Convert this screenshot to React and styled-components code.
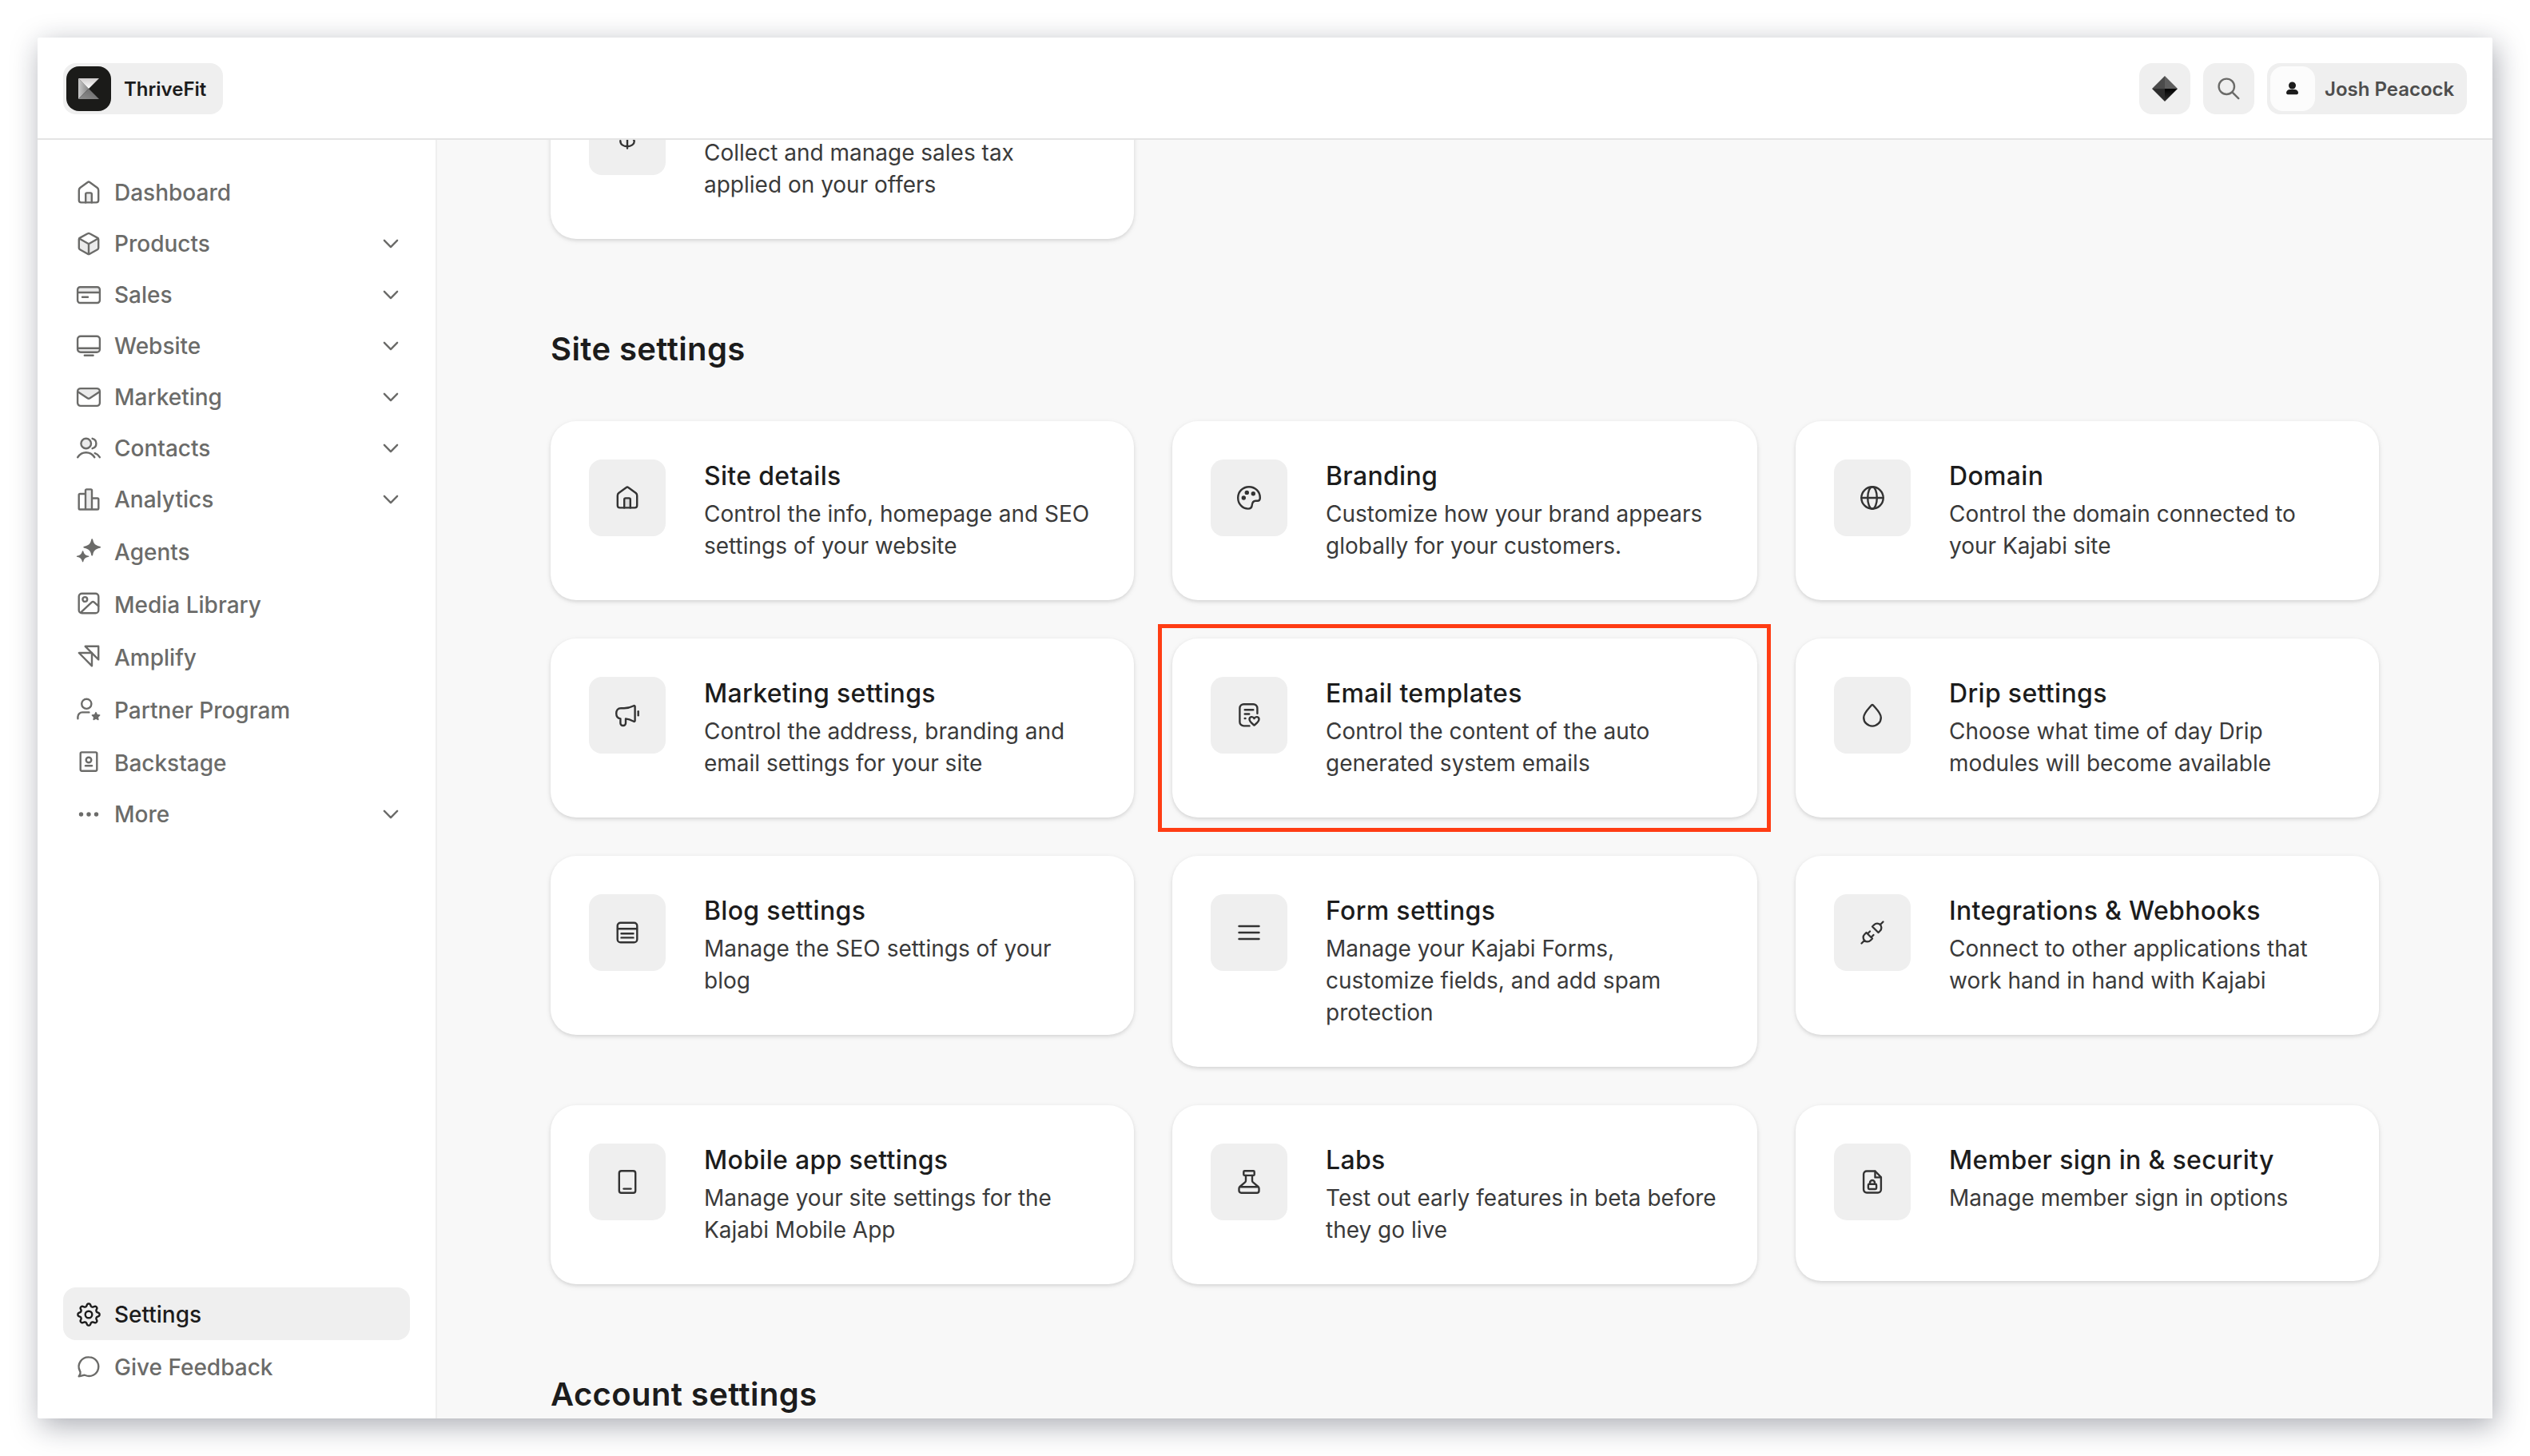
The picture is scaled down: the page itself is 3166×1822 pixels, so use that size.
import React from 'react';
import styled, { createGlobalStyle } from 'styled-components';

const GlobalStyle = createGlobalStyle`
    * {
        box-sizing: border-box;
    }
    body {
        margin: 0;
        background: #ffffff;
        font-family: Inter, 'Liberation Sans', sans-serif;
        -webkit-font-smoothing: antialiased;
    }
    h2, h3, p {
        margin: 0;
    }
`;

const tint = 'rgba(0, 0, 0, 0.08)';

// outline of the settings cog: a circle with eight soft teeth
const cogPath = () => {
    const points = [];
    for (let i = 0; i < 96; i++) {
        const a = (i / 96) * Math.PI * 2;
        const r = 12 + 1.7 * Math.tanh(1.6 * Math.cos(8 * a));
        points.push(`${(16 + r * Math.sin(a)).toFixed(2)} ${(16 - r * Math.cos(a)).toFixed(2)}`);
    }
    return `M${points.join('L')}Z`;
};

const icons = {
    home: (
        <>
            <path d='M12.2 28.4V18a1.6 1.6 0 0 1 1.6-1.6h4.4a1.6 1.6 0 0 1 1.6 1.6v10.4' fill={tint} />
            <path d='M3.8 13.2c0-1.3.5-2.4 1.4-3.2l9.6-7a1.9 1.9 0 0 1 2.4 0l9.6 7c.9.8 1.4 1.9 1.4 3.2v12.4a2.8 2.8 0 0 1-2.8 2.8H6.6a2.8 2.8 0 0 1-2.8-2.8V13.2Z' />
        </>
    ),
    cube: (
        <>
            <path d='M3.8 9.6 16 16.3l12.2-6.7v12.2L16 29 3.8 21.8Z' fill={tint} stroke='none' />
            <path d='M14.8 3.3a2.4 2.4 0 0 1 2.4 0l9.8 5.3c.8.4 1.2 1.2 1.2 2v10.6c0 .9-.5 1.7-1.2 2.1l-9.8 5.4a2.4 2.4 0 0 1-2.4 0L5 23.3c-.7-.4-1.2-1.2-1.2-2.1V10.6c0-.8.4-1.6 1.2-2Z' />
            <path d='M4.2 9.5 16 16.2l11.8-6.7M16 16.2v12.6' />
        </>
    ),
    card: (
        <>
            <path d='M2.2 7h27.6v6H2.2Z' fill={tint} stroke='none' />
            <rect x='2.1' y='6.2' width='27.8' height='19.8' rx='3.2' />
            <path d='M2.5 13h27M8 18.7h7' />
        </>
    ),
    monitor: (
        <>
            <path d='M2.5 18.7h27v4.5h-27Z' fill={tint} stroke='none' />
            <rect x='2.1' y='3.8' width='27.8' height='19.9' rx='3.8' />
            <path d='M2.5 18.7h27M10.8 27.7h10.8' />
        </>
    ),
    mail: (
        <>
            <path d='M3 9.5 14.6 17.2a2.6 2.6 0 0 0 2.8 0L29 9.5 28 5.5H4Z' fill={tint} stroke='none' />
            <rect x='2.1' y='5.1' width='27.8' height='21.8' rx='3.8' />
            <path d='M2.8 9.5 14.5 17.3a2.7 2.7 0 0 0 3 0L29.2 9.5' />
        </>
    ),
    people: (
        <>
            <circle cx='12.7' cy='10' r='6.3' fill={tint} />
            <path d='M20.6 3.8a6.4 6.4 0 0 1 0 12.4M2.2 27.2C4.9 23.4 8.5 21.3 12.7 21.3s7.9 2.1 10.6 5.9M23.7 22.2c2.3.7 4.4 2.3 6.1 5' />
        </>
    ),
    bars: (
        <>
            <path d='M12 3.5h8v25h-8Z' fill={tint} stroke='none' />
            <path d='M12 28.5H5a1.3 1.3 0 0 1-1.3-1.3V10.3A1.3 1.3 0 0 1 5 9h7M20 14.5h7a1.3 1.3 0 0 1 1.3 1.3v11.4a1.3 1.3 0 0 1-1.3 1.3H12V4.7a1.3 1.3 0 0 1 1.3-1.3h5.4A1.3 1.3 0 0 1 20 4.7v23.8' />
        </>
    ),
    sparkles: (
        <g fill='currentColor' stroke='none'>
            <path d='M20.2 1.2c.6 0 .9.5 1 1 1 5 2.8 7.2 8.8 8.6.7.2 1.2.5 1.2 1s-.5.8-1.2 1c-6 1.4-7.8 3.6-8.8 8.6-.1.5-.4 1-1 1s-.9-.5-1-1c-1-5-2.8-7.2-8.8-8.6-.7-.2-1.2-.5-1.2-1s.5-.8 1.2-1c6-1.4 7.8-3.6 8.8-8.6.1-.5.4-1 1-1Z' />
            <path d='M8.6 16.2c.5 0 .7.4.8.8.7 3 2 4.6 6 5.5.6.1 1 .4 1 .8s-.4.7-1 .8c-4 .9-5.3 2.5-6 5.5-.1.4-.3.8-.8.8s-.7-.4-.8-.8c-.7-3-2-4.6-6-5.5-.6-.1-1-.4-1-.8s.4-.7 1-.8c4-.9 5.3-2.5 6-5.5.1-.4.3-.8.8-.8Z' />
        </g>
    ),
    image: (
        <>
            <rect x='3.7' y='3.7' width='24.6' height='24.6' rx='3.8' />
            <circle cx='11.3' cy='11' r='2.9' />
            <path d='m6.2 27.3 13.6-12.7a2.2 2.2 0 0 1 3 0l5.3 4.8' />
        </>
    ),
    amplify: (
        <>
            <path d='M11.7 3.8h16.5v16.6Z' />
            <path d='M3.8 12H20v16.3Z' />
        </>
    ),
    partner: (
        <>
            <circle cx='13.3' cy='9.8' r='6.1' />
            <path d='M2.4 28.3V26A5.6 5.6 0 0 1 8 20.4h8.4' />
            <path
                d='m25 20.6 1.5 2.9 3.2.5-2.3 2.3.5 3.2-2.9-1.4-2.9 1.4.5-3.2-2.3-2.3 3.2-.5Z'
                fill='currentColor'
                strokeWidth='1.4'
            />
        </>
    ),
    badge: (
        <>
            <rect x='5.7' y='4.4' width='20.6' height='23.3' rx='1.6' />
            <circle cx='16' cy='14' r='3.3' />
            <path d='M12 21.3h8' />
        </>
    ),
    dots: (
        <g fill='currentColor' stroke='none'>
            <circle cx='6.5' cy='16' r='2.7' />
            <circle cx='16' cy='16' r='2.7' />
            <circle cx='25.5' cy='16' r='2.7' />
        </g>
    ),
    cog: (
        <>
            <path d={cogPath()} />
            <circle cx='16' cy='16' r='4.3' />
        </>
    ),
    chat: (
        <path d='M16.6 3.4A11.8 11.8 0 1 1 11.7 26c-1-.4-2-.2-3 .2-1.5.6-3 1-5 1 1.3-1.6 2.2-3 1.9-4.8-.1-.7-.4-1.3-.7-2A11.8 11.8 0 0 1 16.6 3.4Z' />
    ),
    chevron: <path d='m7.9 11.8 8.1 8.3 8.1-8.3' />,
    search: <path d='M23 13.3a9.7 9.7 0 1 1-19.4 0 9.7 9.7 0 0 1 19.4 0ZM20.4 20.4l7.8 7.8' />,
    dollar: (
        <path d='M16 2v28.500M24.5 9.5C24 6.6 20.7 4.8 16 4.8s-8.5 2-8.5 5.400c0 3.300 3 4.700 8.500 5.800s8.700 2.400 8.700 5.900-3.700 6.300-8.700 6.300-8.700-2.500-8.700-7' />
    ),
    palette: (
        <>
            <path d='M16 2.2C8.2 2.2 2.2 8.3 2.2 16s5.7 13.6 12.6 13.6c3 0 4.7-1.7 4.9-4.2.3-3.7 1.5-5.6 4.6-5.7h2.3c2.2 0 3.2-1.4 3.2-3.8C29.8 8.2 23.8 2.2 16 2.2Z' />
            <g fill='currentColor' stroke='none'>
                <circle cx='9.3' cy='16' r='2.7' />
                <circle cx='13.3' cy='9.4' r='2.7' />
                <circle cx='21.3' cy='10.7' r='2.7' />
            </g>
        </>
    ),
    globe: (
        <>
            <circle cx='16' cy='16' r='13.7' />
            <ellipse cx='16' cy='16' rx='5.8' ry='13.7' />
            <path d='M2.5 16h27' />
        </>
    ),
    megaphone: (
        <>
            <path d='M8 7.2h4c4.5 0 8-1 12-3 .8-.4 1.6.1 1.6 1v17.6c0 .9-.8 1.4-1.6 1-3.6-1.8-6.3-3-10-3.4V26a3 3 0 0 1-3 3h-.6a3 3 0 0 1-3-3v-5.6C4 19.900 2.2 17.5 2.2 13.8S4.2 7.2 8 7.2Z' />
            <path d='M29.7 11.3v5' />
        </>
    ),
    template: (
        <>
            <path d='M16.5 29.4H9.4a5 5 0 0 1-5-5V7.2a5 5 0 0 1 5-5h12a5 5 0 0 1 5 5v6.6M10.7 9.2h10.6M10.7 14.5h5.500M10.7 20h.8' />
            <path d='M22.5 28.6c-1.8-1.4-6-4.3-6-7.5 0-3.5 4.5-4 6-1 1.5-3 6-2.5 6 1 0 3.2-4.2 6.1-6 7.500Z' />
        </>
    ),
    drop: (
        <path d='M15.2 3.2a1.1 1.1 0 0 1 1.6 0C21.4 8.7 26.8 13.5 26.8 18.9a10.8 10.7 0 0 1-21.6 0C5.2 13.5 10.6 8.7 15.2 3.2Z' />
    ),
    article: (
        <>
            <rect x='3.7' y='3.7' width='24.6' height='24.6' rx='3.8' />
            <path d='M4 11.3h24M8.5 17.2h15M8.5 22.4h15' />
        </>
    ),
    lines: <path d='M3.5 8h25M3.5 16h25M3.5 24h25' />,
    plug: (
        <g transform='translate(-2 -2) scale(1.5)' strokeWidth='1.55'>
            <path d='m7 12 5 5-1.5 1.5a3.536 3.536 0 1 1-5-5L7 12M17 12l-5-5 1.5-1.5a3.536 3.536 0 1 1 5 5L17 12M3 21l2.5-2.5M18.5 5.5 21 3M10 11l-2 2M13 14l-2 2' />
        </g>
    ),
    tablet: (
        <>
            <rect x='5.8' y='2.3' width='20.4' height='27.4' rx='2.8' />
            <path d='M11.5 24.6h9' />
        </>
    ),
    flask: (
        <>
            <rect x='9.3' y='2.3' width='13.4' height='5.6' rx='1.2' />
            <path d='M12 8v6.3c0 .8-.3 1.6-.9 2.1L4.5 22a3 3 0 0 0-1 2.2V27a2.7 2.7 0 0 0 2.7 2.7h19.6a2.7 2.7 0 0 0 2.7-2.7v-2.8a3 3 0 0 0-1-2.2l-6.6-5.6a2.8 2.8 0 0 1-.9-2.1V8M4.5 22.2h23' />
        </>
    ),
    fileLock: (
        <>
            <path d='M19.5 2.5H9a3.9 3.9 0 0 0-3.9 3.9v19.2A3.9 3.9 0 0 0 9 29.5h14a3.9 3.9 0 0 0 3.9-3.9V10.2Z' />
            <path d='M19.5 2.8v7.6h7.2' />
            <rect x='10.9' y='18.7' width='10.2' height='6.3' rx='1.2' />
            <path d='M13 18.5V17a3 3 0 0 1 6 0v1.5' />
        </>
    ),
};

const Svg = styled.svg`
    flex: none;
    width: 32px;
    height: 32px;
    fill: none;
    stroke: currentColor;
    stroke-width: 2.4;
    stroke-linecap: round;
    stroke-linejoin: round;
`;

const Icon = ({ name }) => <Svg viewBox='0 0 32 32'>{icons[name]}</Svg>;

const Logo = () => (
    <svg width='26' height='26' viewBox='0 0 26 26'>
        <defs>
            <linearGradient id='kLeft' x1='0' x2='1' y1='0' y2='0'>
                <stop offset='0' stopColor='#c9c9c9' />
                <stop offset='1' stopColor='#858585' />
            </linearGradient>
            <linearGradient id='kTop' x1='0' x2='0' y1='0' y2='1'>
                <stop offset='0' stopColor='#cfcccc' />
                <stop offset='1' stopColor='#ffffff' />
            </linearGradient>
            <linearGradient id='kBottom' x1='0' x2='1' y1='1' y2='0'>
                <stop offset='0' stopColor='#8f8f8f' />
                <stop offset='1' stopColor='#666666' />
            </linearGradient>
        </defs>
        <path d='M0 0 13 13 0 26Z' fill='url(#kLeft)' />
        <path d='M0 0h26L13 13Z' fill='url(#kTop)' />
        <path d='M0 26h26L13 13Z' fill='url(#kBottom)' />
    </svg>
);

const Gem = () => (
    <svg width='32' height='32' viewBox='0 0 32 32'>
        <defs>
            <linearGradient id='gemBottom' x1='0' x2='0' y1='0' y2='1'>
                <stop offset='0' stopColor='#000000' />
                <stop offset='1' stopColor='#333333' />
            </linearGradient>
        </defs>
        <path d='M16 0v16H0Z' fill='#4b4b4b' />
        <path d='M16 0v16h16Z' fill='#5e5e5e' />
        <path d='M0 16h16v16Z' fill='#2c2c2c' />
        <path d='M16 16h16L16 32Z' fill='url(#gemBottom)' />
    </svg>
);

const Person = () => (
    <svg width='16' height='18' viewBox='0 0 16 18'>
        <circle cx='7.5' cy='5' r='4.5' fill='#1c1c1c' />
        <path d='M4.5 10h6c2.500 0 4.500 1.900 4.500 4.300 0 1-.8 1.900-1.900 1.900H1.900C.8 16.200 0 15.300 0 14.300 0 11.900 2 10 4.500 10Z' fill='#1c1c1c' />
    </svg>
);

const nav = [
    { label: 'Dashboard', icon: 'home' },
    { label: 'Products', icon: 'cube', group: true },
    { label: 'Sales', icon: 'card', group: true },
    { label: 'Website', icon: 'monitor', group: true },
    { label: 'Marketing', icon: 'mail', group: true },
    { label: 'Contacts', icon: 'people', group: true },
    { label: 'Analytics', icon: 'bars', group: true },
    { label: 'Agents', icon: 'sparkles', raised: true },
    { label: 'Media Library', icon: 'image', raised: true },
    { label: 'Amplify', icon: 'amplify', raised: true },
    { label: 'Partner Program', icon: 'partner', raised: true },
    { label: 'Backstage', icon: 'badge', raised: true },
    { label: 'More', icon: 'dots', group: true },
];

const footerNav = [
    { label: 'Settings', icon: 'cog', active: true },
    { label: 'Give Feedback', icon: 'chat' },
];

const siteSettings = [
    { title: 'Site details', icon: 'home', text: 'Control the info, homepage and SEO settings of your website' },
    { title: 'Branding', icon: 'palette', text: 'Customize how your brand appears globally for your customers.' },
    { title: 'Domain', icon: 'globe', text: 'Control the domain connected to your Kajabi site' },
    { title: 'Marketing settings', icon: 'megaphone', text: 'Control the address, branding and email settings for your site' },
    { title: 'Email templates', icon: 'template', text: 'Control the content of the auto generated system emails', highlighted: true },
    { title: 'Drip settings', icon: 'drop', text: 'Choose what time of day Drip modules will become available' },
    { title: 'Blog settings', icon: 'article', text: 'Manage the SEO settings of your blog' },
    { title: 'Form settings', icon: 'lines', text: 'Manage your Kajabi Forms, customize fields, and add spam protection' },
    { title: 'Integrations & Webhooks', icon: 'plug', text: 'Connect to other applications that work hand in hand with Kajabi' },
    { title: 'Mobile app settings', icon: 'tablet', text: 'Manage your site settings for the Kajabi Mobile App' },
    { title: 'Labs', icon: 'flask', text: 'Test out early features in beta before they go live' },
    { title: 'Member sign in & security', icon: 'fileLock', text: 'Manage member sign in options' },
];

const NavItem = ({ item }) => (
    <NavRow $group={item.group} $active={item.active}>
        <NavIcon $raised={item.raised}>
            <Icon name={item.icon} />
        </NavIcon>
        <NavLabel>{item.label}</NavLabel>
        {item.group && <Icon name='chevron' />}
    </NavRow>
);

const SettingCard = ({ title, icon, text, highlighted }) => (
    <Card>
        <Tile>
            <Icon name={icon} />
        </Tile>
        <CardBody>
            <CardTitle>{title}</CardTitle>
            <CardText>{text}</CardText>
        </CardBody>
        {highlighted && <Highlight />}
    </Card>
);

const App = () => {
    return (
        <Page>
            <GlobalStyle />
            <Window>
                <Header>
                    <Pill $width='200px'>
                        <SiteLogo>
                            <Logo />
                        </SiteLogo>
                        <SiteName>ThriveFit</SiteName>
                    </Pill>
                    <HeaderActions>
                        <IconButton>
                            <Gem />
                        </IconButton>
                        <IconButton>
                            <Icon name='search' />
                        </IconButton>
                        <Pill $width='250px'>
                            <Avatar>
                                <Person />
                            </Avatar>
                            <UserName>Josh Peacock</UserName>
                        </Pill>
                    </HeaderActions>
                </Header>
                <Body>
                    <Sidebar>
                        <nav>
                            {nav.map((item) => (
                                <NavItem key={item.label} item={item} />
                            ))}
                        </nav>
                        <nav>
                            {footerNav.map((item) => (
                                <NavItem key={item.label} item={item} />
                            ))}
                        </nav>
                    </Sidebar>
                    <Main>
                        <Grid>
                            <SettingCard icon='dollar' text='Collect and manage sales tax applied on your offers' />
                        </Grid>
                        <SectionTitle>Site settings</SectionTitle>
                        <Grid>
                            {siteSettings.map((card) => (
                                <SettingCard key={card.title} {...card} />
                            ))}
                        </Grid>
                        <SectionTitle>Account settings</SectionTitle>
                    </Main>
                </Body>
            </Window>
        </Page>
    );
};

const Page = styled.div`
    height: 1822px;
    padding: 47px;
    overflow: hidden;
`;

const Window = styled.div`
    display: flex;
    flex-direction: column;
    width: 3072px;
    height: 1728px;
    border-radius: 2px;
    background: #ffffff;
    box-shadow: 4px 9px 36px rgba(20, 26, 45, 0.36);
`;

const Header = styled.header`
    display: flex;
    flex: none;
    align-items: center;
    justify-content: space-between;
    height: 128px;
    padding: 2px 32px 0;
    border-bottom: 2px solid #e4e4e4;
`;

const HeaderActions = styled.div`
    display: flex;
    gap: 16px;
`;

const Pill = styled.div`
    display: flex;
    align-items: center;
    width: ${({ $width }) => $width};
    height: 64px;
    padding: 4px;
    border-radius: 16px;
    background: #efefef;
    white-space: nowrap;
`;

const SiteLogo = styled.div`
    display: flex;
    flex: none;
    align-items: center;
    justify-content: center;
    width: 56px;
    height: 56px;
    border-radius: 16px;
    background: #1b1b19;
`;

const Avatar = styled(SiteLogo)`
    background: #fcfcfc;
`;

const SiteName = styled.span`
    padding-left: 16px;
    color: #1c1c1c;
    font-size: 24px;
    font-weight: 600;
`;

const UserName = styled(SiteName)`
    padding-left: 12px;
    color: #4d4d4d;
`;

const IconButton = styled.div`
    display: flex;
    align-items: center;
    justify-content: center;
    width: 64px;
    height: 64px;
    border-radius: 16px;
    background: #efefef;
    color: #6b6b69;
`;

const Body = styled.div`
    display: flex;
    flex: 1;
    min-height: 0;
`;

const Sidebar = styled.aside`
    display: flex;
    flex: none;
    flex-direction: column;
    justify-content: space-between;
    width: 500px;
    padding: 32px;
    border-right: 2px solid #efefef;
`;

const NavRow = styled.div`
    display: flex;
    align-items: center;
    height: ${({ $group }) => ($group ? '64px' : '66px')};
    padding: ${({ $group }) => ($group ? '0 8px 0 16px' : '2px 8px 0 16px')};
    border-radius: 16px;
    background: ${({ $active }) => ($active ? '#efefef' : 'transparent')};
    color: ${({ $active }) => ($active ? '#1c1c1c' : '#6b6b69')};
`;

const NavIcon = styled.span`
    display: flex;
    margin-bottom: ${({ $raised }) => ($raised ? '4px' : '0')};
`;

const NavLabel = styled.span`
    flex: 1;
    padding-left: 16px;
    font-size: 28px;
    font-weight: 500;
    line-height: 40px;
`;

const Main = styled.main`
    flex: 1;
    padding: 0 142px;
    overflow: hidden;
    background: #f8f8f8;

    /* the page is scrolled a little way into the first row */
    > :first-child {
        margin-top: -100px;
    }
`;

const Grid = styled.div`
    display: grid;
    grid-template-columns: 365fr 366fr 365fr;
    gap: 48px;
    align-items: start;
`;

const SectionTitle = styled.h2`
    padding: 110px 0 62px;
    color: #1c1c1c;
    font-size: 40px;
    font-weight: 600;
    line-height: 56px;
    letter-spacing: 0.01em;
`;

const Card = styled.div`
    position: relative;
    display: flex;
    gap: 48px;
    min-height: 220px;
    padding: 48px;
    border-radius: 32px;
    background: #ffffff;
    box-shadow: 0 2px 4px rgba(0, 0, 0, 0.1), 0 2px 8px rgba(0, 0, 0, 0.06);
`;

const Tile = styled.div`
    display: flex;
    flex: none;
    align-items: center;
    justify-content: center;
    width: 96px;
    height: 96px;
    border-radius: 16px;
    background: #efefef;
    color: #333333;
`;

const CardBody = styled.div`
    flex: 1;
`;

const CardTitle = styled.h3`
    min-height: 41px;
    margin-bottom: 7px;
    padding-top: 1px;
    color: #1c1c1c;
    font-size: 32px;
    font-weight: 500;
    line-height: 40px;
    letter-spacing: 0.01em;
`;

const CardText = styled.p`
    color: #3a3a3a;
    font-size: 28px;
    line-height: 40px;
`;

const Highlight = styled.div`
    position: absolute;
    inset: -18px -17px -18px -18px;
    border: 5px solid #ff3d14;
`;

export default App;
